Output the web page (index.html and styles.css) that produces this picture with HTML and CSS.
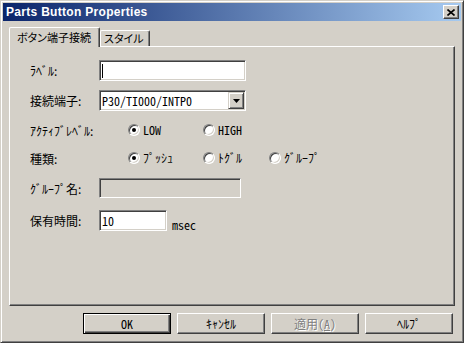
FILE: index.html
```html
<!DOCTYPE html>
<html>
<head>
    <meta charset="UTF-8">
    <title>Parts Button Properties</title>
    <link rel="stylesheet" href="styles.css">
</head>
<body>
    <div class="window">
        <div class="titlebar">
            <span class="title">Parts Button Properties</span>
            <div class="close-btn">
                <svg width="8" height="7" viewBox="0 0 8 7">
                    <path d="M0.5 0.5 L7.5 6.5 M7.5 0.5 L0.5 6.5" stroke="#000" stroke-width="1.6" fill="none"/>
                </svg>
            </div>
        </div>
        <div class="client">
            <div class="tabs">
                <div class="tab active">ボタン端子接続</div>
                <div class="tab">スタイル</div>
            </div>
            <div class="panel">
                <div class="row row-label">
                    <span class="caption">ﾗﾍﾞﾙ:</span>
                    <div class="field field-wide"><span class="caret"></span></div>
                </div>
                <div class="row row-port">
                    <span class="caption">接続端子:</span>
                    <div class="field field-wide combo">
                        <span class="field-text">P30/TI000/INTP0</span>
                        <div class="combo-btn">
                            <svg width="7" height="4" viewBox="0 0 7 4"><path d="M0 0 H7 L3.5 4 Z" fill="#000"/></svg>
                        </div>
                    </div>
                </div>
                <div class="row row-level">
                    <span class="caption">ｱｸﾃｨﾌﾞﾚﾍﾞﾙ:</span>
                    <div class="options">
                        <div class="option opt-1"><span class="radio on"></span>LOW</div>
                        <div class="option opt-2"><span class="radio"></span>HIGH</div>
                    </div>
                </div>
                <div class="row row-kind">
                    <span class="caption">種類:</span>
                    <div class="options">
                        <div class="option opt-1"><span class="radio on"></span>ﾌﾟｯｼｭ</div>
                        <div class="option opt-2"><span class="radio"></span>ﾄｸﾞﾙ</div>
                        <div class="option"><span class="radio"></span>ｸﾞﾙｰﾌﾟ</div>
                    </div>
                </div>
                <div class="row row-group">
                    <span class="caption">ｸﾞﾙｰﾌﾟ名:</span>
                    <div class="field field-group disabled"></div>
                </div>
                <div class="row row-hold">
                    <span class="caption">保有時間:</span>
                    <div class="field field-short"><span class="field-text">10</span></div>
                    <span class="unit">msec</span>
                </div>
            </div>
            <div class="buttons">
                <button class="btn default">OK</button>
                <button class="btn">ｷｬﾝｾﾙ</button>
                <button class="btn disabled">適用(<u>A</u>)</button>
                <button class="btn">ﾍﾙﾌﾟ</button>
            </div>
        </div>
    </div>
</body>
</html>
```

FILE: styles.css
```css
body {
    margin: 0;
    background-color: #d4d0c8;
    font-family: "Noto Sans CJK JP", sans-serif;
    font-size: 12px;
    color: #000;
}

.window {
    width: 464px;
    height: 343px;
    box-sizing: border-box;
    background-color: #d4d0c8;
    border: 1px solid;
    border-color: #d4d0c8 #404040 #404040 #d4d0c8;
    box-shadow: inset 1px 1px #fff, inset -1px -1px #808080;
    padding: 2px;
}

.titlebar {
    height: 18px;
    display: flex;
    align-items: center;
    justify-content: space-between;
    padding: 0 2px 0 3px;
    background: linear-gradient(to right, #0a246a, #a6caf0);
}

.title {
    color: #fff;
    font-family: "Liberation Sans", sans-serif;
    font-weight: bold;
    font-size: 12px;
    letter-spacing: 0.3px;
}

.close-btn {
    width: 16px;
    height: 14px;
    box-sizing: border-box;
    display: flex;
    align-items: center;
    justify-content: center;
    background-color: #d4d0c8;
    border: 1px solid;
    border-color: #fff #404040 #404040 #fff;
    box-shadow: inset -1px -1px #808080;
}

.client {
    padding: 6px 6px 0 6px;
}

.tabs {
    display: flex;
    align-items: flex-end;
    height: 19px;
}

.tab {
    height: 16px;
    box-sizing: border-box;
    padding: 0 5px 0 3px;
    font-size: 11px;
    line-height: 15px;
    white-space: nowrap;
    border-top: 1px solid #fff;
    border-left: 1px solid #fff;
    border-right: 1px solid #404040;
    box-shadow: inset -1px 0 #808080;
    border-radius: 2px 2px 0 0;
    font-feature-settings: "palt";
}

.tab.active {
    width: 91px;
    height: 20px;
    padding-left: 7px;
    padding-right: 0;
    line-height: 18px;
    margin-bottom: -1px;
    position: relative;
    z-index: 1;
    background-color: #d4d0c8;
    overflow: hidden;
}

.panel {
    height: 260px;
    box-sizing: border-box;
    border: 1px solid;
    border-color: #fff #404040 #404040 #fff;
    box-shadow: inset -1px -1px #808080;
    padding-left: 20px;
}

.row {
    display: flex;
    align-items: center;
}

.caption {
    width: 69px;
    flex-shrink: 0;
    font-feature-settings: "palt";
}

.row-label { margin-top: 13px; height: 21px; }
.row-port { margin-top: 9px; height: 21px; }
.row-level { margin-top: 11px; height: 16px; }
.row-kind { margin-top: 12px; height: 16px; }
.row-group { margin-top: 12px; height: 20px; }
.row-hold { margin-top: 12px; height: 21px; }

.field {
    height: 100%;
    box-sizing: border-box;
    display: flex;
    align-items: center;
    background-color: #fff;
    border: 1px solid;
    border-color: #808080 #fff #fff #808080;
    box-shadow: inset 1px 1px #404040, inset -1px -1px #d4d0c8;
    padding-left: 2px;
}

.field.disabled {
    background-color: #d4d0c8;
}

.field-wide { width: 147px; }
.field-group { width: 142px; }
.field-short { width: 68px; }

.field-text {
    font-feature-settings: "hwid";
    line-height: 14px;
}

.caret {
    width: 1px;
    height: 14px;
    background-color: #000;
}

.combo {
    justify-content: space-between;
    padding-right: 1px;
    padding-top: 1px;
    padding-bottom: 1px;
    align-items: stretch;
}

.combo .field-text {
    align-self: center;
}

.combo-btn {
    width: 16px;
    box-sizing: border-box;
    display: flex;
    align-items: center;
    justify-content: center;
    background-color: #d4d0c8;
    border: 1px solid;
    border-color: #d4d0c8 #404040 #404040 #d4d0c8;
    box-shadow: inset 1px 1px #fff, inset -1px -1px #808080;
}

.options {
    display: flex;
    padding-left: 29px;
}

.option {
    display: flex;
    align-items: center;
    gap: 3px;
    line-height: 14px;
    font-feature-settings: "hwid";
}

.opt-1 { width: 75px; }
.opt-2 { width: 66px; }

.radio {
    width: 12px;
    height: 12px;
    box-sizing: border-box;
    border-radius: 50%;
    background-color: #fff;
    border: 1px solid;
    border-color: #808080 #fff #fff #808080;
    box-shadow: inset 1px 1px #404040, inset -1px -1px #d4d0c8;
    display: flex;
    align-items: center;
    justify-content: center;
}

.radio.on::after {
    content: "";
    width: 4px;
    height: 4px;
    border-radius: 50%;
    background-color: #000;
}

.unit {
    align-self: flex-end;
    margin-left: 5px;
    line-height: 13px;
    font-feature-settings: "hwid";
}

.buttons {
    display: flex;
    justify-content: flex-end;
    gap: 6px;
    margin-top: 7px;
    padding-right: 2px;
}

.btn {
    width: 88px;
    height: 21px;
    box-sizing: border-box;
    padding: 0;
    font-family: "Noto Sans CJK JP", sans-serif;
    font-size: 12px;
    color: #000;
    background-color: #d4d0c8;
    border: 1px solid;
    border-color: #fff #404040 #404040 #fff;
    box-shadow: inset -1px -1px #808080;
    font-feature-settings: "hwid";
}

.btn.default {
    border-color: #000;
    box-shadow: inset 1px 1px #fff, inset -1px -1px #404040, inset -2px -2px #808080;
}

.btn.disabled {
    color: #808080;
    text-shadow: 1px 1px #fff;
}
```
